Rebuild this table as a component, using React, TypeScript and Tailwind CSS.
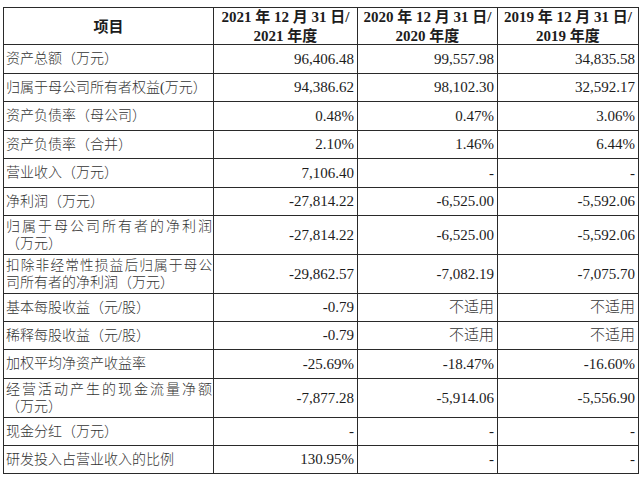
import React from "react";

type Row = { label: React.ReactNode; v: [string, string, string]; h: string; two?: boolean };

const J = "[text-align-last:justify] text-justify";

const rows: Row[] = [
  { label: "资产总额（万元）", v: ["96,406.48", "99,557.98", "34,835.58"], h: "h-[29px]" },
  { label: "归属于母公司所有者权益(万元）", v: ["94,386.62", "98,102.30", "32,592.17"], h: "h-[28px]" },
  { label: "资产负债率（母公司）", v: ["0.48%", "0.47%", "3.06%"], h: "h-[29px]" },
  { label: "资产负债率（合并）", v: ["2.10%", "1.46%", "6.44%"], h: "h-[28px]" },
  { label: "营业收入（万元）", v: ["7,106.40", "-", "-"], h: "h-[29px]" },
  { label: "净利润（万元）", v: ["-27,814.22", "-6,525.00", "-5,592.06"], h: "h-[28px]" },
  {
    label: (
      <>
        <div className={J}>归属于母公司所有者的净利润</div>
        <div>（万元）</div>
      </>
    ),
    v: ["-27,814.22", "-6,525.00", "-5,592.06"],
    h: "h-[39px]",
    two: true,
  },
  {
    label: (
      <>
        <div className={`${J} text-[13.7px] tracking-[-0.1px]`}>扣除非经常性损益后归属于母公</div>
        <div>司所有者的净利润（万元）</div>
      </>
    ),
    v: ["-29,862.57", "-7,082.19", "-7,075.70"],
    h: "h-[39px]",
    two: true,
  },
  { label: "基本每股收益（元/股）", v: ["-0.79", "不适用", "不适用"], h: "h-[28px]" },
  { label: "稀释每股收益（元/股）", v: ["-0.79", "不适用", "不适用"], h: "h-[28px]" },
  { label: "加权平均净资产收益率", v: ["-25.69%", "-18.47%", "-16.60%"], h: "h-[29px]" },
  {
    label: (
      <>
        <div className={J}>经营活动产生的现金流量净额</div>
        <div>（万元）</div>
      </>
    ),
    v: ["-7,877.28", "-5,914.06", "-5,556.90"],
    h: "h-[39px]",
    two: true,
  },
  { label: "现金分红（万元）", v: ["-", "-", "-"], h: "h-[28px]" },
  { label: "研发投入占营业收入的比例", v: ["130.95%", "-", "-"], h: "h-[27px]" },
];

const grid = "grid grid-cols-[210px_144px_140px_140px]";

export default function App() {
  return (
    <div
      lang="zh-CN"
      className="w-[640px] h-[481px] bg-white text-[#1c1c1c] overflow-hidden"
      style={{ fontFamily: '"Liberation Serif", "Noto Sans CJK SC", serif' }}
    >
      <div className="ml-[3px] mt-[7px] w-[636px] border border-[#2a2a2a]">
        {/* header */}
        <div className={`${grid} h-[37px] border-b border-[#2a2a2a] font-bold text-[15px] leading-[19px]`}>
          <div className="border-r border-[#2a2a2a] flex items-center justify-center">项目</div>
          <div className="border-r border-[#2a2a2a] flex flex-col items-center justify-center">
            <div>2021 年 12 月 31 日/</div>
            <div>2021 年度</div>
          </div>
          <div className="border-r border-[#2a2a2a] flex flex-col items-center justify-center">
            <div>2020 年 12 月 31 日/</div>
            <div>2020 年度</div>
          </div>
          <div className="flex flex-col items-center justify-center">
            <div>2019 年 12 月 31 日/</div>
            <div>2019 年度</div>
          </div>
        </div>
        {rows.map((r, i) => (
          <div
            key={i}
            className={`${grid} ${r.h} ${i < rows.length - 1 ? "border-b border-[#2a2a2a]" : ""} text-[14px]`}
          >
            <div
              className={`border-r border-[#2a2a2a] pl-[2px] pr-[1px] flex flex-col justify-center ${
                r.two ? "leading-[17px]" : "leading-[18px]"
              } font-light text-[#333]`}
            >
              {typeof r.label === "string" ? <div>{r.label}</div> : r.label}
            </div>
            {r.v.map((x, j) => (
              <div
                key={j}
                className={`${j < 2 ? "border-r border-[#2a2a2a]" : ""} flex items-center justify-end pr-[3px] text-[15px] ${
                  x === "不适用" ? "font-light text-[14px] text-[#333]" : ""
                }`}
              >
                {x}
              </div>
            ))}
          </div>
        ))}
      </div>
    </div>
  );
}
